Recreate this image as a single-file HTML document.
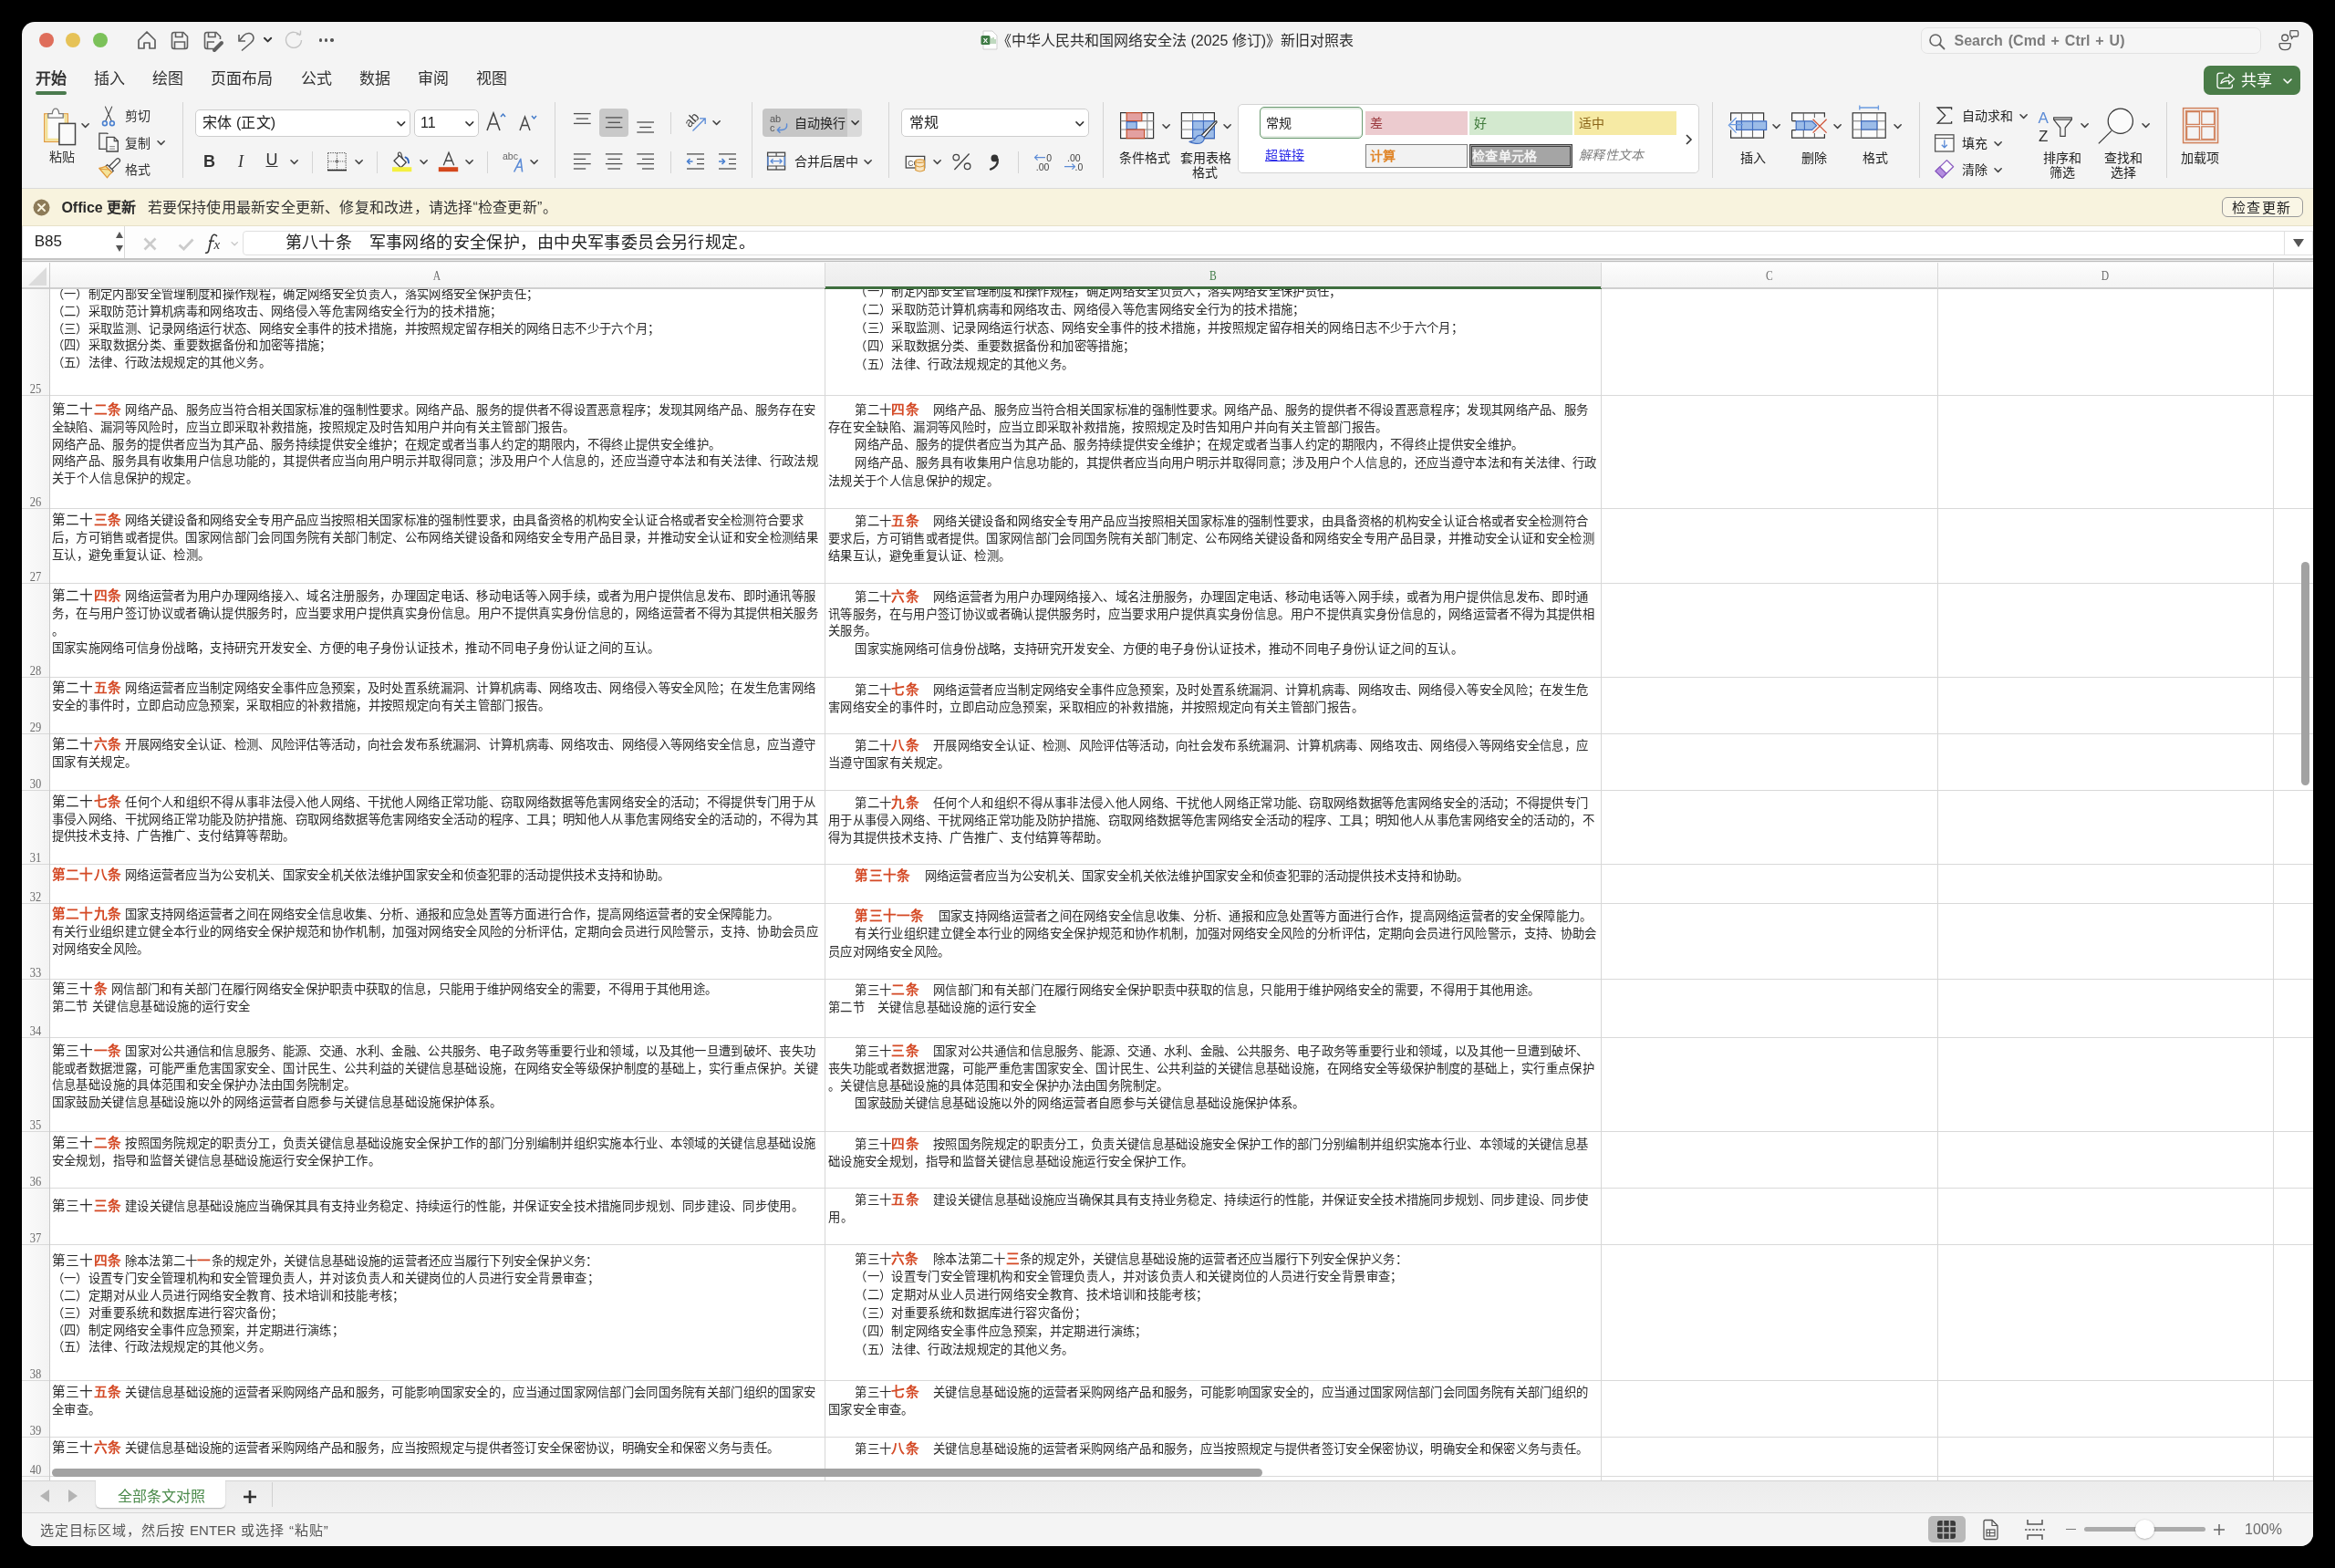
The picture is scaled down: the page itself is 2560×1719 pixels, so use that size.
<!DOCTYPE html><html lang="zh-CN"><head><meta charset="utf-8"><title>Excel</title><style>
html,body{margin:0;padding:0;background:#000;width:2560px;height:1719px;overflow:hidden}
.a{position:absolute;box-sizing:border-box}
.t{white-space:nowrap;overflow:visible}
#win{position:absolute;left:24px;top:24px;width:2512px;height:1671px;border-radius:14px;overflow:hidden;background:#f4f4f4}
#pg{position:absolute;left:-24px;top:-24px;width:2560px;height:1719px;will-change:transform}
.gl{height:20px;line-height:20px;font-size:13.33px;color:#2a2a2a;font-family:"Liberation Sans",sans-serif;white-space:nowrap;text-align:justify;text-align-last:justify}
.rd{color:#d44a26;font-size:14.67px;font-weight:bold}
.bg{font-size:14.67px}
.sep{position:absolute;width:1px;background:#d6d6d6}
</style></head><body><div id="win"><div id="pg">
<div class="a " style="left:42.9px;top:36.0px;width:16.0px;height:16.0px;border-radius:50%;background:#df6e5b;"></div>
<div class="a " style="left:72.1px;top:36.0px;width:16.0px;height:16.0px;border-radius:50%;background:#e6c257;"></div>
<div class="a " style="left:101.5px;top:36.0px;width:16.0px;height:16.0px;border-radius:50%;background:#7bc159;"></div>
<svg class="a" style="left:150px;top:32px;" width="22" height="24" viewBox="0 0 22 24"><path d="M2 12 L11 3 L20 12 V21 H14 V15 H8 V21 H2 Z" fill="none" stroke="#5f5f5f" stroke-width="1.7" stroke-linejoin="round"/></svg>
<svg class="a" style="left:186px;top:34px;" width="22" height="22" viewBox="0 0 22 22"><path d="M2.5 4 Q2.5 1.5 5 1.5 H15 L19.5 6 V17 Q19.5 19.5 17 19.5 H5 Q2.5 19.5 2.5 17 Z" fill="none" stroke="#5f5f5f" stroke-width="1.6"/><path d="M6.5 1.8 V6.5 H14 V1.8 M5.5 19.3 V12 H16.5 V19.3" fill="none" stroke="#5f5f5f" stroke-width="1.6"/></svg>
<svg class="a" style="left:222px;top:34px;" width="24" height="24" viewBox="0 0 24 24"><path d="M12 19.5 H5 Q2.5 19.5 2.5 17 V4 Q2.5 1.5 5 1.5 H15 L19.5 6 V9" fill="none" stroke="#5f5f5f" stroke-width="1.6"/><path d="M6.5 1.8 V6.5 H14 V1.8 M5.5 19.3 V12 H13" fill="none" stroke="#5f5f5f" stroke-width="1.6"/><path d="M13 21 L21 13" stroke="#5f5f5f" stroke-width="4" stroke-linecap="round"/></svg>
<svg class="a" style="left:258px;top:32px;" width="24" height="26" viewBox="0 0 24 26"><path d="M4 6 V13 H11" fill="none" stroke="#5f5f5f" stroke-width="1.6"/><path d="M4.5 12.5 L9 7 Q12 4 15.5 4.5 Q20 5.5 20 10 Q20 12.5 17 15 L7 23.5" fill="none" stroke="#5f5f5f" stroke-width="1.6"/></svg>
<svg class="a" style="left:288.2px;top:40.4px;" width="11.2" height="7.2" viewBox="0 0 11.2 7.2"><path d="M2 1.8 L5.6 5.4 L9.2 1.8" fill="none" stroke="#333" stroke-width="2" stroke-linecap="round" stroke-linejoin="round"/></svg>
<svg class="a" style="left:311px;top:33px;" width="22" height="22" viewBox="0 0 22 22"><path d="M18 6 A8.5 8.5 0 1 0 19.5 11" fill="none" stroke="#c4c4c4" stroke-width="1.4"/><path d="M14 4.5 H18.5 V0.5" fill="none" stroke="#c4c4c4" stroke-width="1.4"/></svg>
<div class="a " style="left:349.8px;top:42.3px;width:3.4px;height:3.4px;border-radius:50%;background:#555;"></div>
<div class="a " style="left:355.8px;top:42.3px;width:3.4px;height:3.4px;border-radius:50%;background:#555;"></div>
<div class="a " style="left:362.3px;top:42.3px;width:3.4px;height:3.4px;border-radius:50%;background:#555;"></div>
<svg class="a" style="left:1075px;top:33px;" width="20" height="23" viewBox="0 0 20 23"><path d="M3 1 H13 L18 6 V21 H3 Z" fill="#fff" stroke="#cfcfcf" stroke-width="1"/><rect x="0.5" y="6" width="10" height="10" rx="1.5" fill="#3f7b45"/><text x="5.5" y="14" font-size="8" font-family="Liberation Sans" font-weight="bold" fill="#fff" text-anchor="middle">X</text><path d="M12 9 V15 M14 8 V15 M16 10 V15" stroke="#7fb27f" stroke-width="1"/></svg>
<div class="a t" style="left:1093.0px;top:34.0px;width:391.0px;height:22px;line-height:22px;font-size:16px;color:#2d2d2d;font-weight:normal;font-family:'Liberation Sans',sans-serif;text-align:justify;text-align-last:justify;">《中华人民共和国网络安全法 (2025 修订)》新旧对照表</div>
<div class="a " style="left:2106.0px;top:30.0px;width:373.0px;height:28.5px;border:1px solid #e2e2e2;border-radius:7px;background:#f6f6f6;"></div>
<svg class="a" style="left:2114px;top:36px;" width="20" height="20" viewBox="0 0 20 20"><circle cx="8" cy="8" r="6" fill="none" stroke="#666" stroke-width="1.6"/><path d="M12.5 12.5 L17.5 17.5" stroke="#666" stroke-width="1.8" stroke-linecap="round"/></svg>
<div class="a t" style="left:2142.5px;top:34.0px;width:187.0px;height:22px;line-height:22px;font-size:16px;color:#7c7c7c;font-weight:bold;font-family:'Liberation Sans',sans-serif;text-align:justify;text-align-last:justify;">Search (Cmd + Ctrl + U)</div>
<svg class="a" style="left:2490px;top:30px" width="40" height="30" viewBox="2490 30 40 30"><circle cx="2505.2" cy="41.4" r="3.4" fill="none" stroke="#5a5a5a" stroke-width="1.4"/><path d="M2499.6 47.6 H2510.8 Q2511.4 47.6 2511.4 48.4 Q2511.2 54.6 2505.2 54.6 Q2499.2 54.6 2499 48.4 Q2499 47.6 2499.6 47.6 Z" fill="none" stroke="#5a5a5a" stroke-width="1.4"/><path d="M2511.4 33.6 H2518 Q2519.6 33.6 2519.6 35.2 V38.4 Q2519.6 40 2518 40 H2514.2 L2512.4 42.6 V40 Q2510.8 40 2510.8 38.4 V35.2 Q2510.8 33.6 2511.4 33.6 Z" fill="none" stroke="#5a5a5a" stroke-width="1.3" stroke-linejoin="round"/></svg>
<div class="a " style="left:2416.0px;top:72.3px;width:106.0px;height:31.7px;background:#4a7c48;border-radius:7px;"></div>
<svg class="a" style="left:2426px;top:76px" width="26" height="24" viewBox="2426 76 26 24"><path d="M2437.8 80.2 H2433.4 Q2431 80.2 2431 82.6 V94.2 Q2431 96.6 2433.4 96.6 H2445 Q2447.4 96.6 2447.4 94.2 V92.4" fill="none" stroke="#fff" stroke-width="1.3"/><path d="M2434.8 91.4 Q2436 85 2443.8 84.8 V81.2 L2449.6 86.6 L2443.8 92 V88.6 Q2438.4 88.4 2434.8 91.4 Z" fill="none" stroke="#fff" stroke-width="1.25" stroke-linejoin="round"/></svg>
<div class="a t" style="left:2457.0px;top:77.0px;width:34.0px;height:24px;line-height:24px;font-size:17px;color:#fff;font-weight:500;font-family:'Liberation Sans',sans-serif;text-align:justify;text-align-last:justify;">共享</div>
<svg class="a" style="left:2501.5px;top:84.5px;" width="12" height="8" viewBox="0 0 12 8"><path d="M2 2.0 L6 6.0 L10 2.0" fill="none" stroke="#fff" stroke-width="1.6" stroke-linecap="round" stroke-linejoin="round"/></svg>
<div class="a t" style="left:38.7px;top:74.5px;width:33.3px;height:24px;line-height:24px;font-size:17px;color:#303030;font-weight:bold;font-family:'Liberation Sans',sans-serif;text-align:justify;text-align-last:justify;">开始</div>
<div class="a t" style="left:102.8px;top:75.0px;width:33.5px;height:24px;line-height:24px;font-size:17px;color:#303030;font-weight:500;font-family:'Liberation Sans',sans-serif;text-align:justify;text-align-last:justify;">插入</div>
<div class="a t" style="left:166.8px;top:75.0px;width:33.6px;height:24px;line-height:24px;font-size:17px;color:#303030;font-weight:500;font-family:'Liberation Sans',sans-serif;text-align:justify;text-align-last:justify;">绘图</div>
<div class="a t" style="left:231.0px;top:75.0px;width:67.7px;height:24px;line-height:24px;font-size:17px;color:#303030;font-weight:500;font-family:'Liberation Sans',sans-serif;text-align:justify;text-align-last:justify;">页面布局</div>
<div class="a t" style="left:329.6px;top:75.0px;width:33.4px;height:24px;line-height:24px;font-size:17px;color:#303030;font-weight:500;font-family:'Liberation Sans',sans-serif;text-align:justify;text-align-last:justify;">公式</div>
<div class="a t" style="left:394.0px;top:75.0px;width:33.5px;height:24px;line-height:24px;font-size:17px;color:#303030;font-weight:500;font-family:'Liberation Sans',sans-serif;text-align:justify;text-align-last:justify;">数据</div>
<div class="a t" style="left:458.4px;top:75.0px;width:33.2px;height:24px;line-height:24px;font-size:17px;color:#303030;font-weight:500;font-family:'Liberation Sans',sans-serif;text-align:justify;text-align-last:justify;">审阅</div>
<div class="a t" style="left:521.8px;top:75.0px;width:33.9px;height:24px;line-height:24px;font-size:17px;color:#303030;font-weight:500;font-family:'Liberation Sans',sans-serif;text-align:justify;text-align-last:justify;">视图</div>
<div class="a " style="left:39.0px;top:100.0px;width:34.0px;height:4.0px;background:#4a7a4e;border-radius:2px;"></div>
<div class="a " style="left:24.0px;top:206.0px;width:2512.0px;height:1.0px;background:#dadada;"></div>
<div class="a " style="left:199.5px;top:112.0px;width:1.0px;height:83.0px;background:#d4d4d4;"></div>
<div class="a " style="left:608.0px;top:112.0px;width:1.0px;height:83.0px;background:#d4d4d4;"></div>
<div class="a " style="left:824.0px;top:112.0px;width:1.0px;height:83.0px;background:#d4d4d4;"></div>
<div class="a " style="left:974.0px;top:112.0px;width:1.0px;height:83.0px;background:#d4d4d4;"></div>
<div class="a " style="left:1209.0px;top:112.0px;width:1.0px;height:83.0px;background:#d4d4d4;"></div>
<div class="a " style="left:1877.0px;top:112.0px;width:1.0px;height:83.0px;background:#d4d4d4;"></div>
<div class="a " style="left:2104.0px;top:112.0px;width:1.0px;height:83.0px;background:#d4d4d4;"></div>
<div class="a " style="left:2375.0px;top:112.0px;width:1.0px;height:83.0px;background:#d4d4d4;"></div>
<svg class="a" style="left:40px;top:112px" width="95" height="88" viewBox="40 112 95 88"><rect x="48.7" y="124.8" width="25.6" height="30.6" fill="#fbfbfb" stroke="#e0993a" stroke-width="1.3"/><rect x="51" y="127.1" width="21" height="26" fill="none" stroke="#f3e196" stroke-width="2.8"/><path d="M52.8 129.2 V124.6 H57.3 Q57.8 119.2 61 119.2 Q64.2 119.2 64.7 124.6 H69.2 V129.2 Z" fill="#fbfbfb" stroke="#7a7a7a" stroke-width="1.3"/><rect x="64.9" y="135.4" width="17.6" height="23.2" fill="#fafafa" stroke="#454545" stroke-width="1.5"/><path d="M115.3 116.6 L122.4 133 M122.9 116.6 L115.6 133" stroke="#444" stroke-width="1.1"/><circle cx="114.9" cy="135.2" r="2.4" fill="none" stroke="#4a80d0" stroke-width="1.6"/><circle cx="122.9" cy="135.2" r="2.4" fill="none" stroke="#4a80d0" stroke-width="1.6"/><path d="M118.3 147 Q118 146.2 117 146.2 H108.9 V163.4 H116.5" fill="none" stroke="#444" stroke-width="1.3"/><path d="M116.9 150.4 H125.2 L129.3 154.6 V166 H116.9 Z" fill="#fafafa" stroke="#444" stroke-width="1.3"/><path d="M125.2 150.4 V154.6 H129.3" fill="none" stroke="#444" stroke-width="1.1"/><path d="M120.2 160.6 H126 M120.2 163.2 H126" stroke="#777" stroke-width="0.9"/><path d="M119.5 182.5 L127.6 174.4 Q129.2 172.8 130.8 174.4 Q132.3 176 130.8 177.6 L122.6 185.6 Z" fill="#fbfbfb" stroke="#444" stroke-width="1.3"/><path d="M117.6 180.6 L124.3 187.3 L122.6 189 L115.9 182.3 Z" fill="#fbfbfb" stroke="#444" stroke-width="1.2"/><path d="M115.9 182.3 Q112 183.6 108.8 184.5 L117.6 194.8 Q119.5 191.4 122.6 189 Z" fill="#f4e39a" stroke="#e0993a" stroke-width="1.3" stroke-linejoin="round"/><path d="M109.5 185.3 L120.5 186" stroke="#e0993a" stroke-width="1.1"/></svg>
<div class="a t" style="left:53.5px;top:162.0px;width:28.0px;height:20px;line-height:20px;font-size:14px;color:#333;font-weight:500;font-family:'Liberation Sans',sans-serif;text-align:center;">粘贴</div>
<svg class="a" style="left:87.9px;top:134.4px;" width="11.2" height="7.2" viewBox="0 0 11.2 7.2"><path d="M2 1.8 L5.6 5.4 L9.2 1.8" fill="none" stroke="#444" stroke-width="1.6" stroke-linecap="round" stroke-linejoin="round"/></svg>
<div class="a t" style="left:137.0px;top:117.0px;width:28.0px;height:20px;line-height:20px;font-size:14px;color:#333;font-weight:500;font-family:'Liberation Sans',sans-serif;text-align:justify;text-align-last:justify;">剪切</div>
<div class="a t" style="left:137.0px;top:147.0px;width:28.0px;height:20px;line-height:20px;font-size:14px;color:#333;font-weight:500;font-family:'Liberation Sans',sans-serif;text-align:justify;text-align-last:justify;">复制</div>
<svg class="a" style="left:171.4px;top:153.4px;" width="11.2" height="7.2" viewBox="0 0 11.2 7.2"><path d="M2 1.8 L5.6 5.4 L9.2 1.8" fill="none" stroke="#444" stroke-width="1.6" stroke-linecap="round" stroke-linejoin="round"/></svg>
<div class="a t" style="left:137.0px;top:176.0px;width:28.0px;height:20px;line-height:20px;font-size:14px;color:#333;font-weight:500;font-family:'Liberation Sans',sans-serif;text-align:justify;text-align-last:justify;">格式</div>
<div class="a " style="left:214.0px;top:119.6px;width:235.6px;height:30.8px;background:#fff;border:1px solid #cdcdcd;border-radius:5px;"></div>
<div class="a t" style="left:222.0px;top:124.0px;width:80.0px;height:22px;line-height:22px;font-size:16px;color:#222;font-weight:normal;font-family:'Liberation Sans',sans-serif;text-align:justify;text-align-last:justify;">宋体 (正文)</div>
<svg class="a" style="left:434.2px;top:131.7px;" width="11.6" height="7.6" viewBox="0 0 11.6 7.6"><path d="M2 1.9 L5.8 5.7 L9.6 1.9" fill="none" stroke="#333" stroke-width="1.6" stroke-linecap="round" stroke-linejoin="round"/></svg>
<div class="a " style="left:453.6px;top:119.6px;width:71.0px;height:30.8px;background:#fff;border:1px solid #cdcdcd;border-radius:5px;"></div>
<div class="a t" style="left:461.0px;top:124.0px;width:17.8px;height:22px;line-height:22px;font-size:16px;color:#222;font-weight:normal;font-family:'Liberation Sans',sans-serif;text-align:left;">11</div>
<svg class="a" style="left:508.7px;top:131.7px;" width="11.6" height="7.6" viewBox="0 0 11.6 7.6"><path d="M2 1.9 L5.8 5.7 L9.6 1.9" fill="none" stroke="#333" stroke-width="1.6" stroke-linecap="round" stroke-linejoin="round"/></svg>
<svg class="a" style="left:532px;top:120px;" width="26" height="26" viewBox="0 0 26 26"><path d="M2 23 L9 4 L16 23 M4.8 16 H13.2" fill="none" stroke="#444" stroke-width="1.5"/><path d="M17 8 L19.5 5 L22 8" fill="none" stroke="#3f78c8" stroke-width="1.4"/></svg>
<svg class="a" style="left:568px;top:124px;" width="24" height="22" viewBox="0 0 24 22"><path d="M2 19 L7.5 4 L13 19 M4 13.5 H11" fill="none" stroke="#444" stroke-width="1.4"/><path d="M15 3 L17.5 6 L20 3" fill="none" stroke="#3f78c8" stroke-width="1.4"/></svg>
<div class="a t" style="left:222.5px;top:164.5px;width:14.0px;height:25px;line-height:25px;font-size:18px;color:#333;font-weight:bold;font-family:'Liberation Sans',sans-serif;text-align:center;">B</div>
<div class="a t" style="left:258.0px;top:164.5px;width:12.0px;height:25px;line-height:25px;font-size:18px;color:#333;font-weight:normal;font-family:'Liberation Serif',serif;text-align:center;font-style:italic;">I</div>
<div class="a t" style="left:291.0px;top:162.5px;width:14.0px;height:25px;line-height:25px;font-size:18px;color:#333;font-weight:normal;font-family:'Liberation Sans',sans-serif;text-align:center;text-decoration:underline;">U</div>
<svg class="a" style="left:317.4px;top:174.4px;" width="11.2" height="7.2" viewBox="0 0 11.2 7.2"><path d="M2 1.8 L5.6 5.4 L9.2 1.8" fill="none" stroke="#444" stroke-width="1.6" stroke-linecap="round" stroke-linejoin="round"/></svg>
<div class="a " style="left:341.5px;top:166.0px;width:1.0px;height:24.0px;background:#d4d4d4;"></div>
<svg class="a" style="left:352px;top:160px" width="28" height="32" viewBox="352 160 28 32"><rect x="359.6" y="167.6" width="19.6" height="18.6" fill="none" stroke="#444" stroke-width="1" stroke-dasharray="1.2 1.3"/><path d="M369.4 168 V186 M360 176.9 H379" stroke="#555" stroke-width="1" stroke-dasharray="1.2 1.3"/><circle cx="369.4" cy="176.9" r="1.3" fill="none" stroke="#444" stroke-width="0.9"/><path d="M359 186.6 H380" stroke="#222" stroke-width="1.5"/></svg>
<svg class="a" style="left:388.4px;top:174.4px;" width="11.2" height="7.2" viewBox="0 0 11.2 7.2"><path d="M2 1.8 L5.6 5.4 L9.2 1.8" fill="none" stroke="#444" stroke-width="1.6" stroke-linecap="round" stroke-linejoin="round"/></svg>
<div class="a " style="left:413.0px;top:166.0px;width:1.0px;height:24.0px;background:#d4d4d4;"></div>
<svg class="a" style="left:425px;top:160px" width="30" height="32" viewBox="425 160 30 32"><path d="M432 176.3 L437.8 170.5 L445.3 178 L439.5 183.8 Z" fill="#fbfbfb" stroke="#444" stroke-width="1.3" stroke-linejoin="round"/><path d="M437 171.3 Q435.6 167.5 437.8 167 Q440 166.8 440.5 171.5 L441.8 174.5" fill="none" stroke="#444" stroke-width="1.2"/><path d="M444.5 172.5 Q447.8 173.5 448 178.5" fill="none" stroke="#2f62b8" stroke-width="1.9" stroke-linecap="round"/><rect x="430" y="183.2" width="21.3" height="5" fill="#f4f040"/></svg>
<svg class="a" style="left:459.4px;top:174.4px;" width="11.2" height="7.2" viewBox="0 0 11.2 7.2"><path d="M2 1.8 L5.6 5.4 L9.2 1.8" fill="none" stroke="#444" stroke-width="1.6" stroke-linecap="round" stroke-linejoin="round"/></svg>
<svg class="a" style="left:478px;top:160px" width="27" height="32" viewBox="478 160 27 32"><path d="M486.3 181.3 L492 167.3 L497.7 181.3 M488.4 176.2 H495.6" fill="none" stroke="#444" stroke-width="1.35"/><rect x="480.8" y="183.2" width="21.4" height="5" fill="#d4481c"/></svg>
<svg class="a" style="left:509.4px;top:174.4px;" width="11.2" height="7.2" viewBox="0 0 11.2 7.2"><path d="M2 1.8 L5.6 5.4 L9.2 1.8" fill="none" stroke="#444" stroke-width="1.6" stroke-linecap="round" stroke-linejoin="round"/></svg>
<div class="a " style="left:534.0px;top:166.0px;width:1.0px;height:24.0px;background:#d4d4d4;"></div>
<svg class="a" style="left:548px;top:162px" width="30" height="30" viewBox="548 162 30 30"><text x="551" y="175.3" font-size="10.5" font-family="Liberation Sans" fill="#666">abc</text><path d="M563.6 188.5 L570.8 174.3 L572.6 188.5 M566.3 183.2 H572" fill="none" stroke="#5b8bd6" stroke-width="1.6" stroke-linejoin="round"/></svg>
<svg class="a" style="left:580.4px;top:174.4px;" width="11.2" height="7.2" viewBox="0 0 11.2 7.2"><path d="M2 1.8 L5.6 5.4 L9.2 1.8" fill="none" stroke="#444" stroke-width="1.6" stroke-linecap="round" stroke-linejoin="round"/></svg>
<div class="a " style="left:657.0px;top:119.0px;width:32.0px;height:31.0px;background:#c9c9c9;border-radius:4px;"></div>
<svg class="a" style="left:620px;top:110px" width="110" height="85" viewBox="620 110 110 85"><path d="M628.9 124.6 H647.7" stroke="#505050" stroke-width="1.3"/><path d="M631.7 130.1 H644.9" stroke="#505050" stroke-width="1.3"/><path d="M628.9 135.4 H647.7" stroke="#505050" stroke-width="1.3"/><path d="M663.9 128.9 H682.4" stroke="#505050" stroke-width="1.3"/><path d="M666.5 134.3 H680" stroke="#505050" stroke-width="1.3"/><path d="M663.9 139.6 H682.4" stroke="#505050" stroke-width="1.3"/><path d="M698.3 134 H717" stroke="#505050" stroke-width="1.3"/><path d="M701.2 139.5 H714.2" stroke="#505050" stroke-width="1.3"/><path d="M698.3 145 H717" stroke="#505050" stroke-width="1.3"/><path d="M628.9 168.9 H647.7" stroke="#505050" stroke-width="1.3"/><path d="M628.9 174.4 H642.2" stroke="#505050" stroke-width="1.3"/><path d="M628.9 179.6 H647.7" stroke="#505050" stroke-width="1.3"/><path d="M628.9 185 H642.2" stroke="#505050" stroke-width="1.3"/><path d="M663.9 168.9 H682.4" stroke="#505050" stroke-width="1.3"/><path d="M666.3 174.4 H680" stroke="#505050" stroke-width="1.3"/><path d="M663.9 179.6 H682.4" stroke="#505050" stroke-width="1.3"/><path d="M666.3 185 H680" stroke="#505050" stroke-width="1.3"/><path d="M698.3 168.9 H717" stroke="#505050" stroke-width="1.3"/><path d="M704 174.4 H717" stroke="#505050" stroke-width="1.3"/><path d="M698.3 179.6 H717" stroke="#505050" stroke-width="1.3"/><path d="M704 185 H717" stroke="#505050" stroke-width="1.3"/></svg>
<div class="a " style="left:735.0px;top:123.0px;width:1.0px;height:24.0px;background:#d4d4d4;"></div>
<div class="a " style="left:735.0px;top:166.0px;width:1.0px;height:24.0px;background:#d4d4d4;"></div>
<svg class="a" style="left:745px;top:115px" width="35" height="35" viewBox="745 115 35 35"><text x="759" y="136" font-size="14.5" font-family="Liberation Sans" fill="#444" transform="rotate(-45 759 132)" text-anchor="middle">ab</text><path d="M759.5 143.5 L773 130 M767 129.8 H773.2 V136" fill="none" stroke="#5b8bd6" stroke-width="1.3"/></svg>
<svg class="a" style="left:780.4px;top:131.4px;" width="11.2" height="7.2" viewBox="0 0 11.2 7.2"><path d="M2 1.8 L5.6 5.4 L9.2 1.8" fill="none" stroke="#444" stroke-width="1.6" stroke-linecap="round" stroke-linejoin="round"/></svg>
<svg class="a" style="left:745px;top:160px" width="70" height="35" viewBox="745 160 70 35"><path d="M753 168.9 H772" stroke="#505050" stroke-width="1.3"/><path d="M764 174.4 H772" stroke="#505050" stroke-width="1.3"/><path d="M764 179.6 H772" stroke="#505050" stroke-width="1.3"/><path d="M753 185 H772" stroke="#505050" stroke-width="1.3"/><path d="M788 168.9 H807" stroke="#505050" stroke-width="1.3"/><path d="M799 174.4 H807" stroke="#505050" stroke-width="1.3"/><path d="M799 179.6 H807" stroke="#505050" stroke-width="1.3"/><path d="M788 185 H807" stroke="#505050" stroke-width="1.3"/><path d="M759.5 177 H753.5 M756.5 174 L753.5 177 L756.5 180" fill="none" stroke="#4a80d0" stroke-width="1.7" stroke-linejoin="round"/><path d="M788 177 H794.5 M791.5 174 L794.5 177 L791.5 180" fill="none" stroke="#4a80d0" stroke-width="1.7" stroke-linejoin="round"/></svg>
<div class="a " style="left:835.8px;top:119.0px;width:93.5px;height:31.0px;background:#c6c6c6;border-radius:4px 0 0 4px;"></div>
<div class="a " style="left:929.3px;top:119.0px;width:16.0px;height:31.0px;background:#d9d9d9;border-radius:0 4px 4px 0;"></div>
<svg class="a" style="left:840px;top:120px" width="30" height="30" viewBox="840 120 30 30"><text x="844" y="133.6" font-size="11" font-family="Liberation Sans" fill="#555">ab</text><text x="844" y="144.2" font-size="11" font-family="Liberation Sans" fill="#555">c</text><path d="M862.6 136 Q863.5 142 857 142.5 H852.5 M855 139.6 L852.3 142.4 L855 145.2" fill="none" stroke="#5b8bd6" stroke-width="1.4" stroke-linejoin="round" stroke-linecap="round"/></svg>
<div class="a t" style="left:871.0px;top:125.0px;width:55.0px;height:20px;line-height:20px;font-size:14px;color:#222;font-weight:500;font-family:'Liberation Sans',sans-serif;text-align:justify;text-align-last:justify;">自动换行</div>
<svg class="a" style="left:931.9px;top:131.4px;" width="11.2" height="7.2" viewBox="0 0 11.2 7.2"><path d="M2 1.8 L5.6 5.4 L9.2 1.8" fill="none" stroke="#333" stroke-width="1.6" stroke-linecap="round" stroke-linejoin="round"/></svg>
<svg class="a" style="left:836px;top:162px" width="30" height="30" viewBox="836 162 30 30"><rect x="841.6" y="167.2" width="19" height="18.8" fill="none" stroke="#444" stroke-width="1.3"/><path d="M841.6 171.3 H860.6 M841.6 182 H860.6 M851.1 167.2 V171.3 M851.1 182 V186" stroke="#444" stroke-width="1.1"/><path d="M842 171.6 V181.7 M860.2 171.6 V181.7" stroke="#5b8bd6" stroke-width="1.5"/><path d="M845 176.7 H857.2 M847.6 174.2 L845 176.7 L847.6 179.2 M854.6 174.2 L857.2 176.7 L854.6 179.2" fill="none" stroke="#5b8bd6" stroke-width="1.3" stroke-linejoin="round"/></svg>
<div class="a t" style="left:871.0px;top:167.0px;width:69.0px;height:20px;line-height:20px;font-size:14px;color:#222;font-weight:500;font-family:'Liberation Sans',sans-serif;text-align:justify;text-align-last:justify;">合并后居中</div>
<svg class="a" style="left:946.4px;top:174.4px;" width="11.2" height="7.2" viewBox="0 0 11.2 7.2"><path d="M2 1.8 L5.6 5.4 L9.2 1.8" fill="none" stroke="#444" stroke-width="1.6" stroke-linecap="round" stroke-linejoin="round"/></svg>
<div class="a " style="left:987.7px;top:119.0px;width:206.3px;height:31.0px;background:#fff;border:1px solid #cdcdcd;border-radius:5px;"></div>
<div class="a t" style="left:997.0px;top:124.0px;width:32.0px;height:22px;line-height:22px;font-size:16px;color:#222;font-weight:500;font-family:'Liberation Sans',sans-serif;text-align:justify;text-align-last:justify;">常规</div>
<svg class="a" style="left:1178.2px;top:131.7px;" width="11.6" height="7.6" viewBox="0 0 11.6 7.6"><path d="M2 1.9 L5.8 5.7 L9.6 1.9" fill="none" stroke="#333" stroke-width="1.6" stroke-linecap="round" stroke-linejoin="round"/></svg>
<svg class="a" style="left:988px;top:162px" width="212" height="30" viewBox="988 162 212 30"><rect x="993.3" y="171.4" width="20.4" height="12.6" fill="#fbfbfb" stroke="#444" stroke-width="1.3"/><text x="995.3" y="181.6" font-size="8.5" font-family="Liberation Sans" fill="#444">CC</text><path d="M1003.8 176.6 V186.6 Q1008.6 189.4 1013.4 186.6 V176.6" fill="#f9e6c4" stroke="#d99a3c" stroke-width="1.2"/><ellipse cx="1008.6" cy="176.6" rx="4.8" ry="1.8" fill="#f9e6c4" stroke="#d99a3c" stroke-width="1.2"/><path d="M1003.8 181.6 Q1008.6 184.4 1013.4 181.6" fill="none" stroke="#d99a3c" stroke-width="1.1"/><path d="M1062.6 168.6 L1046.4 186" stroke="#444" stroke-width="1.4"/><circle cx="1048.3" cy="172.6" r="3.3" fill="none" stroke="#444" stroke-width="1.3"/><circle cx="1060.6" cy="182.3" r="3.3" fill="none" stroke="#444" stroke-width="1.3"/><circle cx="1090.4" cy="173.4" r="3.9" fill="#333"/><path d="M1093.8 174.8 Q1094.6 182 1086 185.6" fill="none" stroke="#333" stroke-width="2.3" stroke-linecap="round"/><text x="1147.2" y="177" font-size="10.5" font-family="Liberation Sans" fill="#444">0</text><text x="1135.8" y="186.6" font-size="10.5" font-family="Liberation Sans" fill="#444">.00</text><path d="M1146 172.6 H1134.5 M1137.6 169.6 L1134.5 172.6 L1137.6 175.6" fill="none" stroke="#5b8bd6" stroke-width="1.3" stroke-linejoin="round"/><text x="1170" y="177" font-size="10.5" font-family="Liberation Sans" fill="#444">.00</text><text x="1178.6" y="186.6" font-size="10.5" font-family="Liberation Sans" fill="#444">.0</text><path d="M1167 182.6 H1178.5 M1175.4 179.6 L1178.5 182.6 L1175.4 185.6" fill="none" stroke="#5b8bd6" stroke-width="1.3" stroke-linejoin="round"/></svg>
<svg class="a" style="left:1022.4000000000001px;top:174.4px;" width="11.2" height="7.2" viewBox="0 0 11.2 7.2"><path d="M2 1.8 L5.6 5.4 L9.2 1.8" fill="none" stroke="#444" stroke-width="1.6" stroke-linecap="round" stroke-linejoin="round"/></svg>
<div class="a " style="left:1116.0px;top:166.0px;width:1.0px;height:24.0px;background:#d4d4d4;"></div>
<svg class="a" style="left:1222px;top:118px" width="48" height="40" viewBox="1222 118 48 40"><rect x="1228.6" y="123.6" width="36" height="28" fill="#fbfbfb" stroke="#333" stroke-width="1.2"/><path d="M1228.6 132.6 H1264.6 M1228.6 142 H1264.6" stroke="#888" stroke-width="1.1"/><path d="M1257.8 123.6 V151.6" stroke="#888" stroke-width="1.1"/><rect x="1235.2" y="123.6" width="16.6" height="9" fill="#e3a0a0" stroke="#c2502e" stroke-width="1.2"/><rect x="1235.2" y="133.6" width="11" height="8" fill="#9cbce8" stroke="#3f6cc0" stroke-width="1.2"/><rect x="1235.2" y="142" width="19.4" height="9.6" fill="#e3a0a0" stroke="#c2502e" stroke-width="1.2"/></svg>
<svg class="a" style="left:1273.0px;top:134.9px;" width="11.2" height="7.2" viewBox="0 0 11.2 7.2"><path d="M2 1.8 L5.6 5.4 L9.2 1.8" fill="none" stroke="#444" stroke-width="1.6" stroke-linecap="round" stroke-linejoin="round"/></svg>
<div class="a t" style="left:1227.0px;top:163.0px;width:54.0px;height:20px;line-height:20px;font-size:14px;color:#222;font-weight:500;font-family:'Liberation Sans',sans-serif;text-align:justify;text-align-last:justify;">条件格式</div>
<svg class="a" style="left:1290px;top:118px" width="50" height="42" viewBox="1290 118 50 42"><rect x="1295.4" y="123.6" width="36" height="28" fill="#fbfbfb" stroke="#333" stroke-width="1.2"/><path d="M1295.4 132.6 H1331.4 M1295.4 142 H1331.4 M1307.6 123.6 V151.6 M1319.4 123.6 V151.6" stroke="#888" stroke-width="1.1"/><path d="M1307.6 132.6 H1331.4 V151.6 H1307.6 Z" fill="#9cbce8" stroke="#3f6cc0" stroke-width="1.2"/><path d="M1307.6 142 H1331.4 M1319.4 132.6 V151.6" stroke="#3f6cc0" stroke-width="1.1"/><path d="M1316.5 149 L1332.2 133.2 Q1334.4 131.6 1334 134.2 L1320 150.6 Z" fill="#fbfbfb" stroke="#333" stroke-width="1.2" stroke-linejoin="round"/><path d="M1316.2 148.4 Q1320.5 149.6 1320.2 152.6 Q1318.5 158 1311 157.4 Q1307 157 1304 155.4 Q1309 154.8 1310.6 151.8 Q1312.5 147.8 1316.2 148.4 Z" fill="#9cbce8" stroke="#3f6cc0" stroke-width="1.2" stroke-linejoin="round"/></svg>
<svg class="a" style="left:1339.9px;top:134.9px;" width="11.2" height="7.2" viewBox="0 0 11.2 7.2"><path d="M2 1.8 L5.6 5.4 L9.2 1.8" fill="none" stroke="#444" stroke-width="1.6" stroke-linecap="round" stroke-linejoin="round"/></svg>
<div class="a t" style="left:1294.0px;top:163.0px;width:54.0px;height:20px;line-height:20px;font-size:14px;color:#222;font-weight:500;font-family:'Liberation Sans',sans-serif;text-align:justify;text-align-last:justify;">套用表格</div>
<div class="a t" style="left:1307.0px;top:179.0px;width:28.0px;height:20px;line-height:20px;font-size:14px;color:#222;font-weight:500;font-family:'Liberation Sans',sans-serif;text-align:justify;text-align-last:justify;">格式</div>
<div class="a " style="left:1356.7px;top:113.7px;width:506.7px;height:76.6px;background:#fff;border:1px solid #d4d4d4;border-radius:5px;"></div>
<div class="a " style="left:1380.5px;top:117.0px;width:113.5px;height:34.5px;background:#fff;border:1.5px solid #6a9a70;border-radius:5px;box-shadow:inset 0 2px 0 #e2ebe2,inset 0 -2px 0 #e2ebe2;"></div>
<div class="a t" style="left:1387.6px;top:124.5px;width:28.0px;height:20px;line-height:20px;font-size:14px;color:#222;font-weight:normal;font-family:'Liberation Sans',sans-serif;text-align:justify;text-align-last:justify;">常规</div>
<div class="a " style="left:1497.0px;top:121.5px;width:112.0px;height:26.2px;background:#eccbcf;"></div>
<div class="a t" style="left:1502.0px;top:124.5px;width:14.0px;height:20px;line-height:20px;font-size:14px;color:#9c3b40;font-weight:normal;font-family:'Liberation Sans',sans-serif;text-align:justify;text-align-last:justify;">差</div>
<div class="a " style="left:1611.0px;top:121.5px;width:113.0px;height:26.2px;background:#d3e9cf;"></div>
<div class="a t" style="left:1616.0px;top:124.5px;width:14.0px;height:20px;line-height:20px;font-size:14px;color:#3f7a3b;font-weight:normal;font-family:'Liberation Sans',sans-serif;text-align:justify;text-align-last:justify;">好</div>
<div class="a " style="left:1726.0px;top:121.5px;width:112.0px;height:26.2px;background:#f6eaa4;"></div>
<div class="a t" style="left:1731.0px;top:124.5px;width:28.0px;height:20px;line-height:20px;font-size:14px;color:#8a6418;font-weight:normal;font-family:'Liberation Sans',sans-serif;text-align:justify;text-align-last:justify;">适中</div>
<div class="a t" style="left:1387.0px;top:160.0px;width:43.0px;height:20px;line-height:20px;font-size:14px;color:#2f2fe8;font-weight:normal;font-family:'Liberation Sans',sans-serif;text-align:justify;text-align-last:justify;text-decoration:underline;">超链接</div>
<div class="a " style="left:1497.0px;top:158.0px;width:111.5px;height:26.0px;background:#f2f2f2;border:1px solid #7f7f7f;"></div>
<div class="a t" style="left:1502.0px;top:161.0px;width:28.0px;height:20px;line-height:20px;font-size:14px;color:#e0862a;font-weight:600;font-family:'Liberation Sans',sans-serif;text-align:justify;text-align-last:justify;">计算</div>
<div class="a " style="left:1611.0px;top:158.0px;width:113.0px;height:26.0px;background:#a5a5a5;border:3px double #3f3f3f;"></div>
<div class="a t" style="left:1614.0px;top:161.0px;width:71.0px;height:20px;line-height:20px;font-size:14px;color:#f4f4f4;font-weight:600;font-family:'Liberation Sans',sans-serif;text-align:justify;text-align-last:justify;">检查单元格</div>
<div class="a t" style="left:1731.0px;top:160.0px;width:71.0px;height:20px;line-height:20px;font-size:14px;color:#7f7f7f;font-weight:normal;font-family:'Liberation Sans',sans-serif;text-align:justify;text-align-last:justify;font-style:italic;">解释性文本</div>
<svg class="a" style="left:1846px;top:146px;" width="12" height="14" viewBox="0 0 12 14"><path d="M3 2 L8 7 L3 12" fill="none" stroke="#333" stroke-width="1.6"/></svg>
<svg class="a" style="left:1888px;top:112px" width="187" height="46" viewBox="1888 112 187 46"><path d="M1897.6 132.6 V123.8 H1933.6 V132.6 M1897.6 142.6 V151.2 H1933.6 V142.6" fill="#fbfbfb" stroke="#333" stroke-width="1.2"/><path d="M1909.4 123.8 V151.2 M1921.5 123.8 V151.2" stroke="#666" stroke-width="1.1"/><path d="M1903.6 132.8 H1936.6 V142.4 H1903.6 Z" fill="#9cbce8" stroke="#3f6cc0" stroke-width="1.2"/><path d="M1909.4 132.8 V142.4 M1921.5 132.8 V142.4" stroke="#3f6cc0" stroke-width="1.1"/><path d="M1911 136.6 H1897 M1903.6 129 L1895.4 137.3 L1903.6 145.6" fill="none" stroke="#6a9ae0" stroke-width="1.3"/><path d="M1964.6 132.6 V123.8 H2000.4 V128.6 M1964.6 142.6 V151.2 H2000.4 V147 M1964.6 132.6 H1969 M1964.6 142.6 H1969" fill="#fbfbfb" stroke="#333" stroke-width="1.2"/><path d="M1977.3 123.8 V151.2 M1989.4 123.8 V129 M1989.4 146 V151.2" stroke="#666" stroke-width="1.1"/><path d="M1969.2 132.8 H1986.6 L1991.6 137.6 L1986.6 142.4 H1969.2 Z" fill="#9cbce8" stroke="#3f6cc0" stroke-width="1.2" stroke-linejoin="round"/><path d="M1978.4 132.8 V142.4" stroke="#3f6cc0" stroke-width="1.1"/><path d="M1987.6 130.8 L2002.6 145.6 M2002.6 130.8 L1987.6 145.6" stroke="#d0553a" stroke-width="1.3"/><rect x="2031.2" y="123.8" width="36" height="27.4" fill="#fbfbfb" stroke="#333" stroke-width="1.2"/><path d="M2031.2 132.8 H2067.2 M2031.2 142 H2067.2 M2040.6 123.8 V151.2 M2057.9 123.8 V151.2" stroke="#777" stroke-width="1.1"/><rect x="2040.6" y="132.8" width="17.3" height="9.2" fill="#9cbce8" stroke="#3f6cc0" stroke-width="1.2"/><path d="M2038.8 118 H2059.4 M2038.8 115.6 V120.4 M2059.4 115.6 V120.4" stroke="#6a9ae0" stroke-width="1.3"/></svg>
<svg class="a" style="left:1942.3000000000002px;top:134.9px;" width="11.2" height="7.2" viewBox="0 0 11.2 7.2"><path d="M2 1.8 L5.6 5.4 L9.2 1.8" fill="none" stroke="#444" stroke-width="1.6" stroke-linecap="round" stroke-linejoin="round"/></svg>
<svg class="a" style="left:2008.9px;top:134.9px;" width="11.2" height="7.2" viewBox="0 0 11.2 7.2"><path d="M2 1.8 L5.6 5.4 L9.2 1.8" fill="none" stroke="#444" stroke-width="1.6" stroke-linecap="round" stroke-linejoin="round"/></svg>
<svg class="a" style="left:2075.4px;top:134.9px;" width="11.2" height="7.2" viewBox="0 0 11.2 7.2"><path d="M2 1.8 L5.6 5.4 L9.2 1.8" fill="none" stroke="#444" stroke-width="1.6" stroke-linecap="round" stroke-linejoin="round"/></svg>
<div class="a t" style="left:1908.0px;top:163.0px;width:28.0px;height:20px;line-height:20px;font-size:14px;color:#222;font-weight:500;font-family:'Liberation Sans',sans-serif;text-align:justify;text-align-last:justify;">插入</div>
<div class="a t" style="left:1975.0px;top:163.0px;width:28.0px;height:20px;line-height:20px;font-size:14px;color:#222;font-weight:500;font-family:'Liberation Sans',sans-serif;text-align:justify;text-align-last:justify;">删除</div>
<div class="a t" style="left:2042.0px;top:163.0px;width:28.0px;height:20px;line-height:20px;font-size:14px;color:#222;font-weight:500;font-family:'Liberation Sans',sans-serif;text-align:justify;text-align-last:justify;">格式</div>
<svg class="a" style="left:2110px;top:110px" width="330" height="90" viewBox="2110 110 330 90"><path d="M2139.6 120.2 V118 H2124.2 L2132.6 126.6 L2124.2 135.2 H2139.6 V133" fill="none" stroke="#333" stroke-width="1.3"/><rect x="2121.6" y="147.8" width="20.4" height="18.2" fill="#fbfbfb" stroke="#555" stroke-width="1.3"/><path d="M2121.6 151.6 H2142" stroke="#555" stroke-width="1.1"/><path d="M2131.8 153.6 V161.8 M2128.8 158.8 L2131.8 161.8 L2134.8 158.8" fill="none" stroke="#5b8bd6" stroke-width="1.3" stroke-linejoin="round"/><path d="M2122 187.6 L2134.4 175.6 L2141.6 182.8 L2129.4 194.8 Z" fill="#fbfbfb" stroke="#8a5cc0" stroke-width="1.3" stroke-linejoin="round"/><path d="M2122 187.6 L2126.6 183 L2133.8 190.2 L2129.4 194.8 Z" fill="#b48ee0" stroke="#8a5cc0" stroke-width="1.3" stroke-linejoin="round"/><text x="2234.6" y="135.4" font-size="17" font-family="Liberation Sans" fill="#5b8bd6">A</text><text x="2235" y="155" font-size="17" font-family="Liberation Sans" fill="#333">Z</text><path d="M2251.6 128.8 H2271.4 V131.2 L2264.2 140 V149.4 H2258.8 V140 L2251.6 131.2 Z M2251.6 131.2 H2271.4" fill="none" stroke="#444" stroke-width="1.2" stroke-linejoin="round"/><circle cx="2324.8" cy="132.7" r="13.6" fill="#fbfbfb" stroke="#333" stroke-width="1.2"/><path d="M2315 143.4 L2300.8 157.4" stroke="#333" stroke-width="1.2"/><rect x="2393.6" y="118.6" width="38" height="38" fill="none" stroke="#d0805a" stroke-width="1.5"/><rect x="2396.4" y="121.4" width="32.4" height="32.4" fill="none" stroke="#d0805a" stroke-width="1"/><rect x="2397.6" y="122.6" width="13.8" height="13.8" fill="none" stroke="#d0805a" stroke-width="1.3"/><rect x="2413.8" y="122.6" width="13.8" height="13.8" fill="none" stroke="#d0805a" stroke-width="1.3"/><rect x="2397.6" y="138.8" width="13.8" height="13.8" fill="none" stroke="#d0805a" stroke-width="1.3"/><rect x="2413.8" y="138.8" width="13.8" height="13.8" fill="none" stroke="#d0805a" stroke-width="1.3"/></svg>
<div class="a t" style="left:2151.0px;top:117.0px;width:55.0px;height:20px;line-height:20px;font-size:14px;color:#222;font-weight:500;font-family:'Liberation Sans',sans-serif;text-align:justify;text-align-last:justify;">自动求和</div>
<svg class="a" style="left:2212.9px;top:123.9px;" width="11.2" height="7.2" viewBox="0 0 11.2 7.2"><path d="M2 1.8 L5.6 5.4 L9.2 1.8" fill="none" stroke="#444" stroke-width="1.6" stroke-linecap="round" stroke-linejoin="round"/></svg>
<div class="a t" style="left:2151.0px;top:147.0px;width:28.0px;height:20px;line-height:20px;font-size:14px;color:#222;font-weight:500;font-family:'Liberation Sans',sans-serif;text-align:justify;text-align-last:justify;">填充</div>
<svg class="a" style="left:2185.4px;top:153.9px;" width="11.2" height="7.2" viewBox="0 0 11.2 7.2"><path d="M2 1.8 L5.6 5.4 L9.2 1.8" fill="none" stroke="#444" stroke-width="1.6" stroke-linecap="round" stroke-linejoin="round"/></svg>
<div class="a t" style="left:2151.0px;top:176.0px;width:28.0px;height:20px;line-height:20px;font-size:14px;color:#222;font-weight:500;font-family:'Liberation Sans',sans-serif;text-align:justify;text-align-last:justify;">清除</div>
<svg class="a" style="left:2185.4px;top:183.4px;" width="11.2" height="7.2" viewBox="0 0 11.2 7.2"><path d="M2 1.8 L5.6 5.4 L9.2 1.8" fill="none" stroke="#444" stroke-width="1.6" stroke-linecap="round" stroke-linejoin="round"/></svg>
<svg class="a" style="left:2279.9px;top:134.4px;" width="11.2" height="7.2" viewBox="0 0 11.2 7.2"><path d="M2 1.8 L5.6 5.4 L9.2 1.8" fill="none" stroke="#444" stroke-width="1.6" stroke-linecap="round" stroke-linejoin="round"/></svg>
<div class="a t" style="left:2240.0px;top:163.0px;width:42.0px;height:20px;line-height:20px;font-size:14px;color:#222;font-weight:500;font-family:'Liberation Sans',sans-serif;text-align:justify;text-align-last:justify;">排序和</div>
<div class="a t" style="left:2247.0px;top:179.0px;width:28.0px;height:20px;line-height:20px;font-size:14px;color:#222;font-weight:500;font-family:'Liberation Sans',sans-serif;text-align:justify;text-align-last:justify;">筛选</div>
<svg class="a" style="left:2346.9px;top:134.4px;" width="11.2" height="7.2" viewBox="0 0 11.2 7.2"><path d="M2 1.8 L5.6 5.4 L9.2 1.8" fill="none" stroke="#444" stroke-width="1.6" stroke-linecap="round" stroke-linejoin="round"/></svg>
<div class="a t" style="left:2307.0px;top:163.0px;width:42.0px;height:20px;line-height:20px;font-size:14px;color:#222;font-weight:500;font-family:'Liberation Sans',sans-serif;text-align:justify;text-align-last:justify;">查找和</div>
<div class="a t" style="left:2314.0px;top:179.0px;width:28.0px;height:20px;line-height:20px;font-size:14px;color:#222;font-weight:500;font-family:'Liberation Sans',sans-serif;text-align:justify;text-align-last:justify;">选择</div>
<div class="a t" style="left:2391.0px;top:163.0px;width:42.0px;height:20px;line-height:20px;font-size:14px;color:#222;font-weight:500;font-family:'Liberation Sans',sans-serif;text-align:justify;text-align-last:justify;">加载项</div>
<div class="a " style="left:24.0px;top:207.0px;width:2512.0px;height:41.0px;background:#f8f3de;"></div>
<div class="a " style="left:24.0px;top:247.0px;width:2512.0px;height:1.0px;background:#e6e0c8;"></div>
<svg class="a" style="left:36px;top:218px;" width="19" height="19" viewBox="0 0 19 19"><circle cx="9.5" cy="9.5" r="9" fill="#8d7b58"/><path d="M6 6 L13 13 M13 6 L6 13" stroke="#f8f3de" stroke-width="2" stroke-linecap="round"/></svg>
<div class="a t" style="left:67.4px;top:217.0px;width:81.6px;height:22px;line-height:22px;font-size:16px;color:#2a2a2a;font-weight:bold;font-family:'Liberation Sans',sans-serif;text-align:justify;text-align-last:justify;">Office 更新</div>
<div class="a t" style="left:161.5px;top:217.0px;width:449.0px;height:22px;line-height:22px;font-size:16px;color:#333;font-weight:normal;font-family:'Liberation Sans',sans-serif;text-align:justify;text-align-last:justify;">若要保持使用最新安全更新、修复和改进，请选择“检查更新”。</div>
<div class="a " style="left:2436.0px;top:215.5px;width:88.6px;height:22.5px;border:1px solid #9a9a9a;border-radius:6px;background:#faf6e6;"></div>
<div class="a t" style="left:2447.0px;top:216.5px;width:64.0px;height:21px;line-height:21px;font-size:15px;color:#222;font-weight:normal;font-family:'Liberation Sans',sans-serif;text-align:justify;text-align-last:justify;">检查更新</div>
<div class="a " style="left:24.0px;top:248.0px;width:2512.0px;height:35.5px;background:#fdfdfd;"></div>
<div class="a " style="left:24.0px;top:248.0px;width:112.6px;height:35.0px;background:#fff;border-right:1.5px solid #d9d9d9;border-left:1px solid #dcdcdc;"></div>
<div class="a t" style="left:37.7px;top:253.0px;width:30.2px;height:24px;line-height:24px;font-size:17px;color:#222;font-weight:normal;font-family:'Liberation Sans',sans-serif;text-align:left;">B85</div>
<svg class="a" style="left:126px;top:252px;" width="12" height="28" viewBox="0 0 12 28"><path d="M1 9 L5 2 L9 9 Z M1 17 L5 24 L9 17 Z" fill="#555"/></svg>
<svg class="a" style="left:156px;top:259px;" width="17" height="17" viewBox="0 0 17 17"><path d="M2.5 2.5 L14.5 14.5 M14.5 2.5 L2.5 14.5" stroke="#cbcbcb" stroke-width="2.7"/></svg>
<svg class="a" style="left:194px;top:259px;" width="20" height="17" viewBox="0 0 20 17"><path d="M2.5 9.5 L7.5 14 L17.5 3.5" fill="none" stroke="#cbcbcb" stroke-width="2.8"/></svg>
<svg class="a" style="left:222px;top:252px" width="30" height="28" viewBox="222 252 30 28"><path d="M237.5 258.6 Q236 256.6 233.8 257.6 Q232.2 258.4 231.6 262 L228.8 274.6 Q228 277.6 225.6 277.2" fill="none" stroke="#333" stroke-width="1.6" stroke-linecap="round"/><path d="M229 264.2 H235" stroke="#333" stroke-width="1.4"/><text x="234.6" y="272.6" font-size="15" font-family="Liberation Serif" font-style="italic" fill="#333">x</text></svg>
<svg class="a" style="left:251.8px;top:263.8px;" width="10.4" height="6.4" viewBox="0 0 10.4 6.4"><path d="M2 1.6 L5.2 4.8 L8.4 1.6" fill="none" stroke="#c4c4c4" stroke-width="1.3" stroke-linecap="round" stroke-linejoin="round"/></svg>
<div class="a " style="left:265.5px;top:253.0px;width:2239.0px;height:26.8px;background:#fff;border:1px solid #e0e0e0;border-radius:4px 0 0 4px;"></div>
<div class="a " style="left:2504.0px;top:253.0px;width:32.0px;height:26.8px;background:#fff;border:1px solid #e0e0e0;"></div>
<svg class="a" style="left:2513px;top:261px;" width="14" height="12" viewBox="0 0 14 12"><path d="M1 1 H13 L7 10 Z" fill="#555"/></svg>
<div class="a t" style="left:312.6px;top:253.5px;width:515.0px;height:25px;line-height:25px;font-size:18px;color:#222;font-weight:normal;font-family:'Liberation Sans',sans-serif;text-align:justify;text-align-last:justify;">第八十条　军事网络的安全保护，由中央军事委员会另行规定。</div>
<div class="a " style="left:24.0px;top:283.0px;width:2512.0px;height:1.5px;background:#c4c4c4;"></div>
<div class="a " style="left:24.0px;top:284.5px;width:2512.0px;height:1.8px;background:#e8e8e8;"></div>
<div class="a " style="left:24.0px;top:286.2px;width:2512.0px;height:1.3px;background:#bdbdbd;"></div>
<div class="a " style="left:24.0px;top:287.5px;width:2512.0px;height:28.5px;background:linear-gradient(#fdfdfd,#f3f3f3);"></div>
<div class="a " style="left:904.0px;top:287.5px;width:851.5px;height:28.5px;background:linear-gradient(#f3f3f3,#ececec);"></div>
<div class="a " style="left:24.0px;top:315.0px;width:2512.0px;height:1.5px;background:#cfcfcf;"></div>
<div class="a " style="left:904.0px;top:314.0px;width:851.5px;height:3.0px;background:#3f6f3f;"></div>
<svg class="a" style="left:28px;top:291px;" width="26" height="24" viewBox="0 0 26 24"><path d="M3 22 L23 2 V22 Z" fill="#dcdcdc"/></svg>
<div class="a " style="left:53.5px;top:287.5px;width:1.0px;height:28.0px;background:#d8d8d8;"></div>
<div class="a " style="left:903.5px;top:287.5px;width:1.0px;height:28.0px;background:#d8d8d8;"></div>
<div class="a " style="left:1755.0px;top:287.5px;width:1.0px;height:28.0px;background:#d8d8d8;"></div>
<div class="a " style="left:2123.5px;top:287.5px;width:1.0px;height:28.0px;background:#d8d8d8;"></div>
<div class="a " style="left:2491.5px;top:287.5px;width:1.0px;height:28.0px;background:#d8d8d8;"></div>
<div class="a t" style="left:473.0px;top:292.0px;width:12.0px;height:20px;line-height:20px;font-size:14.5px;color:#6e6e6e;font-weight:normal;font-family:'Liberation Serif',serif;text-align:center;transform:scaleX(0.8);">A</div>
<div class="a t" style="left:1323.8px;top:292.0px;width:12.0px;height:20px;line-height:20px;font-size:14.5px;color:#3f7a45;font-weight:normal;font-family:'Liberation Serif',serif;text-align:center;transform:scaleX(0.8);">B</div>
<div class="a t" style="left:1933.8px;top:292.0px;width:12.0px;height:20px;line-height:20px;font-size:14.5px;color:#6e6e6e;font-weight:normal;font-family:'Liberation Serif',serif;text-align:center;transform:scaleX(0.8);">C</div>
<div class="a t" style="left:2302.0px;top:292.0px;width:12.0px;height:20px;line-height:20px;font-size:14.5px;color:#6e6e6e;font-weight:normal;font-family:'Liberation Serif',serif;text-align:center;transform:scaleX(0.8);">D</div>
<div class="a " style="left:24.0px;top:316.5px;width:2512.0px;height:1307.0px;background:#fff;"></div>
<div class="a " style="left:24.0px;top:316.5px;width:30.0px;height:1307.0px;background:linear-gradient(90deg,#fbfbfb,#f3f3f3);"></div>
<div class="a " style="left:24.0px;top:432.9px;width:2512.0px;height:1.0px;background:#d9d9d9;"></div>
<div class="a " style="left:24.0px;top:557.0px;width:2512.0px;height:1.0px;background:#d9d9d9;"></div>
<div class="a " style="left:24.0px;top:638.6px;width:2512.0px;height:1.0px;background:#d9d9d9;"></div>
<div class="a " style="left:24.0px;top:742.0px;width:2512.0px;height:1.0px;background:#d9d9d9;"></div>
<div class="a " style="left:24.0px;top:803.5px;width:2512.0px;height:1.0px;background:#d9d9d9;"></div>
<div class="a " style="left:24.0px;top:865.5px;width:2512.0px;height:1.0px;background:#d9d9d9;"></div>
<div class="a " style="left:24.0px;top:946.7px;width:2512.0px;height:1.0px;background:#d9d9d9;"></div>
<div class="a " style="left:24.0px;top:990.0px;width:2512.0px;height:1.0px;background:#d9d9d9;"></div>
<div class="a " style="left:24.0px;top:1072.7px;width:2512.0px;height:1.0px;background:#d9d9d9;"></div>
<div class="a " style="left:24.0px;top:1136.5px;width:2512.0px;height:1.0px;background:#d9d9d9;"></div>
<div class="a " style="left:24.0px;top:1240.2px;width:2512.0px;height:1.0px;background:#d9d9d9;"></div>
<div class="a " style="left:24.0px;top:1301.8px;width:2512.0px;height:1.0px;background:#d9d9d9;"></div>
<div class="a " style="left:24.0px;top:1363.7px;width:2512.0px;height:1.0px;background:#d9d9d9;"></div>
<div class="a " style="left:24.0px;top:1512.9px;width:2512.0px;height:1.0px;background:#d9d9d9;"></div>
<div class="a " style="left:24.0px;top:1574.9px;width:2512.0px;height:1.0px;background:#d9d9d9;"></div>
<div class="a " style="left:24.0px;top:1617.5px;width:2512.0px;height:1.0px;background:#d9d9d9;"></div>
<div class="a " style="left:903.5px;top:316.5px;width:1.0px;height:1307.0px;background:#d7d7d7;"></div>
<div class="a " style="left:1755.0px;top:316.5px;width:1.0px;height:1307.0px;background:#d7d7d7;"></div>
<div class="a " style="left:2123.5px;top:316.5px;width:1.0px;height:1307.0px;background:#d7d7d7;"></div>
<div class="a " style="left:2491.5px;top:316.5px;width:1.0px;height:1307.0px;background:#d7d7d7;"></div>
<div class="a " style="left:53.5px;top:287.5px;width:1.5px;height:1336.0px;background:#c9c9c9;"></div>
<div class="a t" style="left:30.0px;top:417.9px;width:18.0px;height:16px;line-height:16px;font-size:14.5px;color:#6a6a6a;font-weight:normal;font-family:'Liberation Serif',serif;text-align:center;transform:scaleX(0.86);">25</div>
<div class="a t" style="left:30.0px;top:542.0px;width:18.0px;height:16px;line-height:16px;font-size:14.5px;color:#6a6a6a;font-weight:normal;font-family:'Liberation Serif',serif;text-align:center;transform:scaleX(0.86);">26</div>
<div class="a t" style="left:30.0px;top:623.6px;width:18.0px;height:16px;line-height:16px;font-size:14.5px;color:#6a6a6a;font-weight:normal;font-family:'Liberation Serif',serif;text-align:center;transform:scaleX(0.86);">27</div>
<div class="a t" style="left:30.0px;top:727.0px;width:18.0px;height:16px;line-height:16px;font-size:14.5px;color:#6a6a6a;font-weight:normal;font-family:'Liberation Serif',serif;text-align:center;transform:scaleX(0.86);">28</div>
<div class="a t" style="left:30.0px;top:788.5px;width:18.0px;height:16px;line-height:16px;font-size:14.5px;color:#6a6a6a;font-weight:normal;font-family:'Liberation Serif',serif;text-align:center;transform:scaleX(0.86);">29</div>
<div class="a t" style="left:30.0px;top:850.5px;width:18.0px;height:16px;line-height:16px;font-size:14.5px;color:#6a6a6a;font-weight:normal;font-family:'Liberation Serif',serif;text-align:center;transform:scaleX(0.86);">30</div>
<div class="a t" style="left:30.0px;top:931.7px;width:18.0px;height:16px;line-height:16px;font-size:14.5px;color:#6a6a6a;font-weight:normal;font-family:'Liberation Serif',serif;text-align:center;transform:scaleX(0.86);">31</div>
<div class="a t" style="left:30.0px;top:975.0px;width:18.0px;height:16px;line-height:16px;font-size:14.5px;color:#6a6a6a;font-weight:normal;font-family:'Liberation Serif',serif;text-align:center;transform:scaleX(0.86);">32</div>
<div class="a t" style="left:30.0px;top:1057.7px;width:18.0px;height:16px;line-height:16px;font-size:14.5px;color:#6a6a6a;font-weight:normal;font-family:'Liberation Serif',serif;text-align:center;transform:scaleX(0.86);">33</div>
<div class="a t" style="left:30.0px;top:1121.5px;width:18.0px;height:16px;line-height:16px;font-size:14.5px;color:#6a6a6a;font-weight:normal;font-family:'Liberation Serif',serif;text-align:center;transform:scaleX(0.86);">34</div>
<div class="a t" style="left:30.0px;top:1225.2px;width:18.0px;height:16px;line-height:16px;font-size:14.5px;color:#6a6a6a;font-weight:normal;font-family:'Liberation Serif',serif;text-align:center;transform:scaleX(0.86);">35</div>
<div class="a t" style="left:30.0px;top:1286.8px;width:18.0px;height:16px;line-height:16px;font-size:14.5px;color:#6a6a6a;font-weight:normal;font-family:'Liberation Serif',serif;text-align:center;transform:scaleX(0.86);">36</div>
<div class="a t" style="left:30.0px;top:1348.7px;width:18.0px;height:16px;line-height:16px;font-size:14.5px;color:#6a6a6a;font-weight:normal;font-family:'Liberation Serif',serif;text-align:center;transform:scaleX(0.86);">37</div>
<div class="a t" style="left:30.0px;top:1497.9px;width:18.0px;height:16px;line-height:16px;font-size:14.5px;color:#6a6a6a;font-weight:normal;font-family:'Liberation Serif',serif;text-align:center;transform:scaleX(0.86);">38</div>
<div class="a t" style="left:30.0px;top:1559.9px;width:18.0px;height:16px;line-height:16px;font-size:14.5px;color:#6a6a6a;font-weight:normal;font-family:'Liberation Serif',serif;text-align:center;transform:scaleX(0.86);">39</div>
<div class="a t" style="left:30.0px;top:1602.5px;width:18.0px;height:16px;line-height:16px;font-size:14.5px;color:#6a6a6a;font-weight:normal;font-family:'Liberation Serif',serif;text-align:center;transform:scaleX(0.86);">40</div>
<div class="a" style="left:0;top:316.5px;width:2560px;height:1306.5px;overflow:hidden"><div class="a" style="left:0;top:-316.5px;width:2560px;height:1719px">
<div class="a gl" style="left:56.8px;top:313px;width:533.2px">（一）制定内部安全管理制度和操作规程，确定网络安全负责人，落实网络安全保护责任；</div>
<div class="a gl" style="left:56.8px;top:332px;width:493.2px">（二）采取防范计算机病毒和网络攻击、网络侵入等危害网络安全行为的技术措施；</div>
<div class="a gl" style="left:56.8px;top:351px;width:666.5px">（三）采取监测、记录网络运行状态、网络安全事件的技术措施，并按照规定留存相关的网络日志不少于六个月；</div>
<div class="a gl" style="left:56.8px;top:369px;width:306.6px">（四）采取数据分类、重要数据备份和加密等措施；</div>
<div class="a gl" style="left:56.8px;top:388px;width:239.9px">（五）法律、行政法规规定的其他义务。</div>
<div class="a gl" style="left:56.8px;top:439px;width:837.2px"><span class="bg">第二十</span><span class="rd">二条</span> 网络产品、服务应当符合相关国家标准的强制性要求。网络产品、服务的提供者不得设置恶意程序；发现其网络产品、服务存在安</div>
<div class="a gl" style="left:56.8px;top:459px;width:573.2px">全缺陷、漏洞等风险时，应当立即采取补救措施，按照规定及时告知用户并向有关主管部门报告。</div>
<div class="a gl" style="left:56.8px;top:478px;width:733.2px">网络产品、服务的提供者应当为其产品、服务持续提供安全维护；在规定或者当事人约定的期限内，不得终止提供安全维护。</div>
<div class="a gl" style="left:56.8px;top:496px;width:839.8px">网络产品、服务具有收集用户信息功能的，其提供者应当向用户明示并取得同意；涉及用户个人信息的，还应当遵守本法和有关法律、行政法规</div>
<div class="a gl" style="left:56.8px;top:515px;width:160.0px">关于个人信息保护的规定。</div>
<div class="a gl" style="left:56.8px;top:560px;width:823.8px"><span class="bg">第二十</span><span class="rd">三条</span> 网络关键设备和网络安全专用产品应当按照相关国家标准的强制性要求，由具备资格的机构安全认证合格或者安全检测符合要求</div>
<div class="a gl" style="left:56.8px;top:580px;width:839.8px">后，方可销售或者提供。国家网信部门会同国务院有关部门制定、公布网络关键设备和网络安全专用产品目录，并推动安全认证和安全检测结果</div>
<div class="a gl" style="left:56.8px;top:599px;width:173.3px">互认，避免重复认证、检测。</div>
<div class="a gl" style="left:56.8px;top:643px;width:837.2px"><span class="bg">第二十</span><span class="rd">四条</span> 网络运营者为用户办理网络接入、域名注册服务，办理固定电话、移动电话等入网手续，或者为用户提供信息发布、即时通讯等服</div>
<div class="a gl" style="left:56.8px;top:663px;width:839.8px">务，在与用户签订协议或者确认提供服务时，应当要求用户提供真实身份信息。用户不提供真实身份信息的，网络运营者不得为其提供相关服务</div>
<div class="a gl" style="left:56.8px;top:682px;width:13.3px">。</div>
<div class="a gl" style="left:56.8px;top:701px;width:666.5px">国家实施网络可信身份战略，支持研究开发安全、方便的电子身份认证技术，推动不同电子身份认证之间的互认。</div>
<div class="a gl" style="left:56.8px;top:744px;width:837.2px"><span class="bg">第二十</span><span class="rd">五条</span> 网络运营者应当制定网络安全事件应急预案，及时处置系统漏洞、计算机病毒、网络攻击、网络侵入等安全风险；在发生危害网络</div>
<div class="a gl" style="left:56.8px;top:764px;width:546.5px">安全的事件时，立即启动应急预案，采取相应的补救措施，并按照规定向有关主管部门报告。</div>
<div class="a gl" style="left:56.8px;top:806px;width:837.2px"><span class="bg">第二十</span><span class="rd">六条</span> 开展网络安全认证、检测、风险评估等活动，向社会发布系统漏洞、计算机病毒、网络攻击、网络侵入等网络安全信息，应当遵守</div>
<div class="a gl" style="left:56.8px;top:826px;width:93.3px">国家有关规定。</div>
<div class="a gl" style="left:56.8px;top:869px;width:837.2px"><span class="bg">第二十</span><span class="rd">七条</span> 任何个人和组织不得从事非法侵入他人网络、干扰他人网络正常功能、窃取网络数据等危害网络安全的活动；不得提供专门用于从</div>
<div class="a gl" style="left:56.8px;top:889px;width:839.8px">事侵入网络、干扰网络正常功能及防护措施、窃取网络数据等危害网络安全活动的程序、工具；明知他人从事危害网络安全的活动的，不得为其</div>
<div class="a gl" style="left:56.8px;top:907px;width:266.6px">提供技术支持、广告推广、支付结算等帮助。</div>
<div class="a gl" style="left:56.8px;top:949px;width:677.2px"><span class="rd">第二十八条</span> 网络运营者应当为公安机关、国家安全机关依法维护国家安全和侦查犯罪的活动提供技术支持和协助。</div>
<div class="a gl" style="left:56.8px;top:992px;width:797.2px"><span class="rd">第二十九条</span> 国家支持网络运营者之间在网络安全信息收集、分析、通报和应急处置等方面进行合作，提高网络运营者的安全保障能力。</div>
<div class="a gl" style="left:56.8px;top:1012px;width:839.8px">有关行业组织建立健全本行业的网络安全保护规范和协作机制，加强对网络安全风险的分析评估，定期向会员进行风险警示，支持、协助会员应</div>
<div class="a gl" style="left:56.8px;top:1031px;width:106.6px">对网络安全风险。</div>
<div class="a gl" style="left:56.8px;top:1074px;width:729.2px"><span class="bg">第三十</span><span class="rd">条</span> 网信部门和有关部门在履行网络安全保护职责中获取的信息，只能用于维护网络安全的需要，不得用于其他用途。</div>
<div class="a gl" style="left:56.8px;top:1094px;width:217.3px">第二节 关键信息基础设施的运行安全</div>
<div class="a gl" style="left:56.8px;top:1142px;width:837.2px"><span class="bg">第三十</span><span class="rd">一条</span> 国家对公共通信和信息服务、能源、交通、水利、金融、公共服务、电子政务等重要行业和领域，以及其他一旦遭到破坏、丧失功</div>
<div class="a gl" style="left:56.8px;top:1162px;width:839.8px">能或者数据泄露，可能严重危害国家安全、国计民生、公共利益的关键信息基础设施，在网络安全等级保护制度的基础上，实行重点保护。关键</div>
<div class="a gl" style="left:56.8px;top:1180px;width:333.3px">信息基础设施的具体范围和安全保护办法由国务院制定。</div>
<div class="a gl" style="left:56.8px;top:1199px;width:493.2px">国家鼓励关键信息基础设施以外的网络运营者自愿参与关键信息基础设施保护体系。</div>
<div class="a gl" style="left:56.8px;top:1243px;width:837.2px"><span class="bg">第三十</span><span class="rd">二条</span> 按照国务院规定的职责分工，负责关键信息基础设施安全保护工作的部门分别编制并组织实施本行业、本领域的关键信息基础设施</div>
<div class="a gl" style="left:56.8px;top:1263px;width:359.9px">安全规划，指导和监督关键信息基础设施运行安全保护工作。</div>
<div class="a gl" style="left:56.8px;top:1312px;width:823.8px"><span class="bg">第三十</span><span class="rd">三条</span> 建设关键信息基础设施应当确保其具有支持业务稳定、持续运行的性能，并保证安全技术措施同步规划、同步建设、同步使用。</div>
<div class="a gl" style="left:56.8px;top:1372px;width:598.6px"><span class="bg">第三十</span><span class="rd">四条</span> 除本法第二十<span class="rd">一</span>条的规定外，关键信息基础设施的运营者还应当履行下列安全保护义务：</div>
<div class="a gl" style="left:56.8px;top:1392px;width:599.9px">（一）设置专门安全管理机构和安全管理负责人，并对该负责人和关键岗位的人员进行安全背景审查；</div>
<div class="a gl" style="left:56.8px;top:1411px;width:386.6px">（二）定期对从业人员进行网络安全教育、技术培训和技能考核；</div>
<div class="a gl" style="left:56.8px;top:1430px;width:253.3px">（三）对重要系统和数据库进行容灾备份；</div>
<div class="a gl" style="left:56.8px;top:1449px;width:319.9px">（四）制定网络安全事件应急预案，并定期进行演练；</div>
<div class="a gl" style="left:56.8px;top:1467px;width:239.9px">（五）法律、行政法规规定的其他义务。</div>
<div class="a gl" style="left:56.8px;top:1516px;width:837.2px"><span class="bg">第三十</span><span class="rd">五条</span> 关键信息基础设施的运营者采购网络产品和服务，可能影响国家安全的，应当通过国家网信部门会同国务院有关部门组织的国家安</div>
<div class="a gl" style="left:56.8px;top:1536px;width:53.3px">全审查。</div>
<div class="a gl" style="left:56.8px;top:1577px;width:797.2px"><span class="bg">第三十</span><span class="rd">六条</span> 关键信息基础设施的运营者采购网络产品和服务，应当按照规定与提供者签订安全保密协议，明确安全和保密义务与责任。</div>
<div class="a gl" style="left:937.3px;top:310px;width:533.2px">（一）制定内部安全管理制度和操作规程，确定网络安全负责人，落实网络安全保护责任；</div>
<div class="a gl" style="left:937.3px;top:330px;width:493.2px">（二）采取防范计算机病毒和网络攻击、网络侵入等危害网络安全行为的技术措施；</div>
<div class="a gl" style="left:937.3px;top:350px;width:666.5px">（三）采取监测、记录网络运行状态、网络安全事件的技术措施，并按照规定留存相关的网络日志不少于六个月；</div>
<div class="a gl" style="left:937.3px;top:370px;width:306.6px">（四）采取数据分类、重要数据备份和加密等措施；</div>
<div class="a gl" style="left:937.3px;top:390px;width:239.9px">（五）法律、行政法规规定的其他义务。</div>
<div class="a gl" style="left:937.3px;top:439px;width:803.8px">第二十<span class="rd">四条　</span>网络产品、服务应当符合相关国家标准的强制性要求。网络产品、服务的提供者不得设置恶意程序；发现其网络产品、服务</div>
<div class="a gl" style="left:908.0px;top:459px;width:613.2px">存在安全缺陷、漏洞等风险时，应当立即采取补救措施，按照规定及时告知用户并向有关主管部门报告。</div>
<div class="a gl" style="left:937.3px;top:478px;width:733.2px">网络产品、服务的提供者应当为其产品、服务持续提供安全维护；在规定或者当事人约定的期限内，不得终止提供安全维护。</div>
<div class="a gl" style="left:937.3px;top:498px;width:813.1px">网络产品、服务具有收集用户信息功能的，其提供者应当向用户明示并取得同意；涉及用户个人信息的，还应当遵守本法和有关法律、行政</div>
<div class="a gl" style="left:908.0px;top:518px;width:186.6px">法规关于个人信息保护的规定。</div>
<div class="a gl" style="left:937.3px;top:561px;width:803.8px">第二十<span class="rd">五条　</span>网络关键设备和网络安全专用产品应当按照相关国家标准的强制性要求，由具备资格的机构安全认证合格或者安全检测符合</div>
<div class="a gl" style="left:908.0px;top:581px;width:839.8px">要求后，方可销售或者提供。国家网信部门会同国务院有关部门制定、公布网络关键设备和网络安全专用产品目录，并推动安全认证和安全检测</div>
<div class="a gl" style="left:908.0px;top:600px;width:200.0px">结果互认，避免重复认证、检测。</div>
<div class="a gl" style="left:937.3px;top:644px;width:803.8px">第二十<span class="rd">六条　</span>网络运营者为用户办理网络接入、域名注册服务，办理固定电话、移动电话等入网手续，或者为用户提供信息发布、即时通</div>
<div class="a gl" style="left:908.0px;top:664px;width:839.8px">讯等服务，在与用户签订协议或者确认提供服务时，应当要求用户提供真实身份信息。用户不提供真实身份信息的，网络运营者不得为其提供相</div>
<div class="a gl" style="left:908.0px;top:682px;width:53.3px">关服务。</div>
<div class="a gl" style="left:937.3px;top:702px;width:666.5px">国家实施网络可信身份战略，支持研究开发安全、方便的电子身份认证技术，推动不同电子身份认证之间的互认。</div>
<div class="a gl" style="left:937.3px;top:746px;width:803.8px">第二十<span class="rd">七条　</span>网络运营者应当制定网络安全事件应急预案，及时处置系统漏洞、计算机病毒、网络攻击、网络侵入等安全风险；在发生危</div>
<div class="a gl" style="left:908.0px;top:766px;width:586.5px">害网络安全的事件时，立即启动应急预案，采取相应的补救措施，并按照规定向有关主管部门报告。</div>
<div class="a gl" style="left:937.3px;top:807px;width:803.8px">第二十<span class="rd">八条　</span>开展网络安全认证、检测、风险评估等活动，向社会发布系统漏洞、计算机病毒、网络攻击、网络侵入等网络安全信息，应</div>
<div class="a gl" style="left:908.0px;top:827px;width:133.3px">当遵守国家有关规定。</div>
<div class="a gl" style="left:937.3px;top:870px;width:803.8px">第二十<span class="rd">九条　</span>任何个人和组织不得从事非法侵入他人网络、干扰他人网络正常功能、窃取网络数据等危害网络安全的活动；不得提供专门</div>
<div class="a gl" style="left:908.0px;top:890px;width:839.8px">用于从事侵入网络、干扰网络正常功能及防护措施、窃取网络数据等危害网络安全活动的程序、工具；明知他人从事危害网络安全的活动的，不</div>
<div class="a gl" style="left:908.0px;top:909px;width:306.6px">得为其提供技术支持、广告推广、支付结算等帮助。</div>
<div class="a gl" style="left:937.3px;top:950px;width:673.2px"><span class="rd">第三十条　</span>网络运营者应当为公安机关、国家安全机关依法维护国家安全和侦查犯罪的活动提供技术支持和协助。</div>
<div class="a gl" style="left:937.3px;top:994px;width:807.8px"><span class="rd">第三十一条　</span>国家支持网络运营者之间在网络安全信息收集、分析、通报和应急处置等方面进行合作，提高网络运营者的安全保障能力。</div>
<div class="a gl" style="left:937.3px;top:1014px;width:813.1px">有关行业组织建立健全本行业的网络安全保护规范和协作机制，加强对网络安全风险的分析评估，定期向会员进行风险警示，支持、协助会</div>
<div class="a gl" style="left:908.0px;top:1034px;width:133.3px">员应对网络安全风险。</div>
<div class="a gl" style="left:937.3px;top:1075px;width:750.5px">第三十<span class="rd">二条　</span>网信部门和有关部门在履行网络安全保护职责中获取的信息，只能用于维护网络安全的需要，不得用于其他用途。</div>
<div class="a gl" style="left:908.0px;top:1095px;width:228.0px">第二节　关键信息基础设施的运行安全</div>
<div class="a gl" style="left:937.3px;top:1142px;width:803.8px">第三十<span class="rd">三条　</span>国家对公共通信和信息服务、能源、交通、水利、金融、公共服务、电子政务等重要行业和领域，以及其他一旦遭到破坏、</div>
<div class="a gl" style="left:908.0px;top:1162px;width:839.8px">丧失功能或者数据泄露，可能严重危害国家安全、国计民生、公共利益的关键信息基础设施，在网络安全等级保护制度的基础上，实行重点保护</div>
<div class="a gl" style="left:908.0px;top:1181px;width:373.2px">。关键信息基础设施的具体范围和安全保护办法由国务院制定。</div>
<div class="a gl" style="left:937.3px;top:1200px;width:493.2px">国家鼓励关键信息基础设施以外的网络运营者自愿参与关键信息基础设施保护体系。</div>
<div class="a gl" style="left:937.3px;top:1244px;width:803.8px">第三十<span class="rd">四条　</span>按照国务院规定的职责分工，负责关键信息基础设施安全保护工作的部门分别编制并组织实施本行业、本领域的关键信息基</div>
<div class="a gl" style="left:908.0px;top:1264px;width:399.9px">础设施安全规划，指导和监督关键信息基础设施运行安全保护工作。</div>
<div class="a gl" style="left:937.3px;top:1305px;width:803.8px">第三十<span class="rd">五条　</span>建设关键信息基础设施应当确保其具有支持业务稳定、持续运行的性能，并保证安全技术措施同步规划、同步建设、同步使</div>
<div class="a gl" style="left:908.0px;top:1325px;width:26.7px">用。</div>
<div class="a gl" style="left:937.3px;top:1370px;width:605.2px">第三十<span class="rd">六条　</span>除本法第二十<span class="rd">三</span>条的规定外，关键信息基础设施的运营者还应当履行下列安全保护义务：</div>
<div class="a gl" style="left:937.3px;top:1390px;width:599.9px">（一）设置专门安全管理机构和安全管理负责人，并对该负责人和关键岗位的人员进行安全背景审查；</div>
<div class="a gl" style="left:937.3px;top:1410px;width:386.6px">（二）定期对从业人员进行网络安全教育、技术培训和技能考核；</div>
<div class="a gl" style="left:937.3px;top:1430px;width:253.3px">（三）对重要系统和数据库进行容灾备份；</div>
<div class="a gl" style="left:937.3px;top:1450px;width:319.9px">（四）制定网络安全事件应急预案，并定期进行演练；</div>
<div class="a gl" style="left:937.3px;top:1470px;width:239.9px">（五）法律、行政法规规定的其他义务。</div>
<div class="a gl" style="left:937.3px;top:1516px;width:803.8px">第三十<span class="rd">七条　</span>关键信息基础设施的运营者采购网络产品和服务，可能影响国家安全的，应当通过国家网信部门会同国务院有关部门组织的</div>
<div class="a gl" style="left:908.0px;top:1536px;width:93.3px">国家安全审查。</div>
<div class="a gl" style="left:937.3px;top:1578px;width:803.8px">第三十<span class="rd">八条　</span>关键信息基础设施的运营者采购网络产品和服务，应当按照规定与提供者签订安全保密协议，明确安全和保密义务与责任。</div>
</div></div>
<div class="a " style="left:57.0px;top:1609.5px;width:1327.0px;height:9.0px;background:#a2a2a2;border-radius:4.5px;"></div>
<div class="a " style="left:2522.7px;top:616.3px;width:9.1px;height:244.3px;background:#a2a2a2;border-radius:4.5px;"></div>
<div class="a " style="left:24.0px;top:1623.0px;width:2512.0px;height:35.0px;background:linear-gradient(#ececec,#f1f1f1);"></div>
<div class="a " style="left:24.0px;top:1622.8px;width:2512.0px;height:1.0px;background:#d4d4d4;"></div>
<svg class="a" style="left:42px;top:1632px;" width="14" height="16" viewBox="0 0 14 16"><path d="M12 1 V15 L2 8 Z" fill="#b4b4b4"/></svg>
<svg class="a" style="left:73px;top:1632px;" width="14" height="16" viewBox="0 0 14 16"><path d="M2 1 V15 L12 8 Z" fill="#b4b4b4"/></svg>
<div class="a " style="left:105.4px;top:1622.8px;width:142.1px;height:30.6px;background:#fff;border-radius:0 0 5px 5px;box-shadow:0 1px 1.5px rgba(0,0,0,0.25);"></div>
<div class="a t" style="left:129.0px;top:1630.0px;width:94.0px;height:22px;line-height:22px;font-size:16px;color:#4a8a4a;font-weight:normal;font-family:'Liberation Sans',sans-serif;text-align:justify;text-align-last:justify;">全部条文对照</div>
<svg class="a" style="left:266px;top:1633px;" width="16" height="16" viewBox="0 0 16 16"><path d="M8 1 V15 M1 8 H15" stroke="#333" stroke-width="2.6"/></svg>
<div class="a " style="left:297.5px;top:1625.0px;width:1.0px;height:27.0px;background:#d0d0d0;"></div>
<div class="a " style="left:24.0px;top:1657.5px;width:2512.0px;height:1.0px;background:#d6d6d6;"></div>
<div class="a " style="left:24.0px;top:1658.5px;width:2512.0px;height:36.5px;background:#f4f4f4;"></div>
<div class="a t" style="left:43.7px;top:1666.5px;width:316.0px;height:21px;line-height:21px;font-size:15px;color:#555;font-weight:normal;font-family:'Liberation Sans',sans-serif;text-align:justify;text-align-last:justify;">选定目标区域，然后按 ENTER 或选择 “粘贴”</div>
<div class="a " style="left:2114.0px;top:1661.5px;width:41.0px;height:29.3px;background:#b9b9b9;border-radius:5px;"></div>
<svg class="a" style="left:2123px;top:1666px;" width="22" height="22" viewBox="0 0 22 22"><rect x="1" y="1" width="20" height="20" rx="3" fill="#3a3a3a"/><path d="M7.5 1 V21 M14.5 1 V21 M1 7.5 H21 M1 14.5 H21" stroke="#b9b9b9" stroke-width="1.6"/></svg>
<svg class="a" style="left:2173px;top:1665px;" width="20" height="24" viewBox="0 0 20 24"><path d="M2 3 Q2 1.5 3.5 1.5 H11 L17 7.5 V21 Q17 22.5 15.5 22.5 H3.5 Q2 22.5 2 21 Z" fill="none" stroke="#555" stroke-width="1.3"/><path d="M11 1.5 V7.5 H17" fill="none" stroke="#555" stroke-width="1.2"/><rect x="5" y="12" width="9" height="7" fill="none" stroke="#555" stroke-width="1.2"/><path d="M5 15.5 H14 M8.5 12 V19" stroke="#555" stroke-width="1"/></svg>
<svg class="a" style="left:2219px;top:1665px;" width="24" height="24" viewBox="0 0 24 24"><path d="M4 1 V6 H20 V1 M4 23 V18 H20 V23" fill="none" stroke="#555" stroke-width="1.5"/><path d="M1 12 H23" stroke="#555" stroke-width="1.3" stroke-dasharray="2.5 1.5"/></svg>
<div class="a " style="left:2265.0px;top:1675.8px;width:11.0px;height:1.6px;background:#777;"></div>
<div class="a " style="left:2285.0px;top:1673.5px;width:133.0px;height:5.5px;background:#ababab;border-radius:3px;"></div>
<div class="a " style="left:2341.0px;top:1666.0px;width:20.5px;height:20.5px;background:#fff;border-radius:50%;box-shadow:0 0.5px 2px rgba(0,0,0,0.35);"></div>
<svg class="a" style="left:2425px;top:1669px;" width="16" height="16" viewBox="0 0 16 16"><path d="M8 2 V14 M2 8 H14" stroke="#666" stroke-width="1.5"/></svg>
<div class="a t" style="left:2461.0px;top:1666.0px;width:40.9px;height:22px;line-height:22px;font-size:16px;color:#6a6a6a;font-weight:normal;font-family:'Liberation Sans',sans-serif;text-align:left;">100%</div>
</div></div></body></html>
